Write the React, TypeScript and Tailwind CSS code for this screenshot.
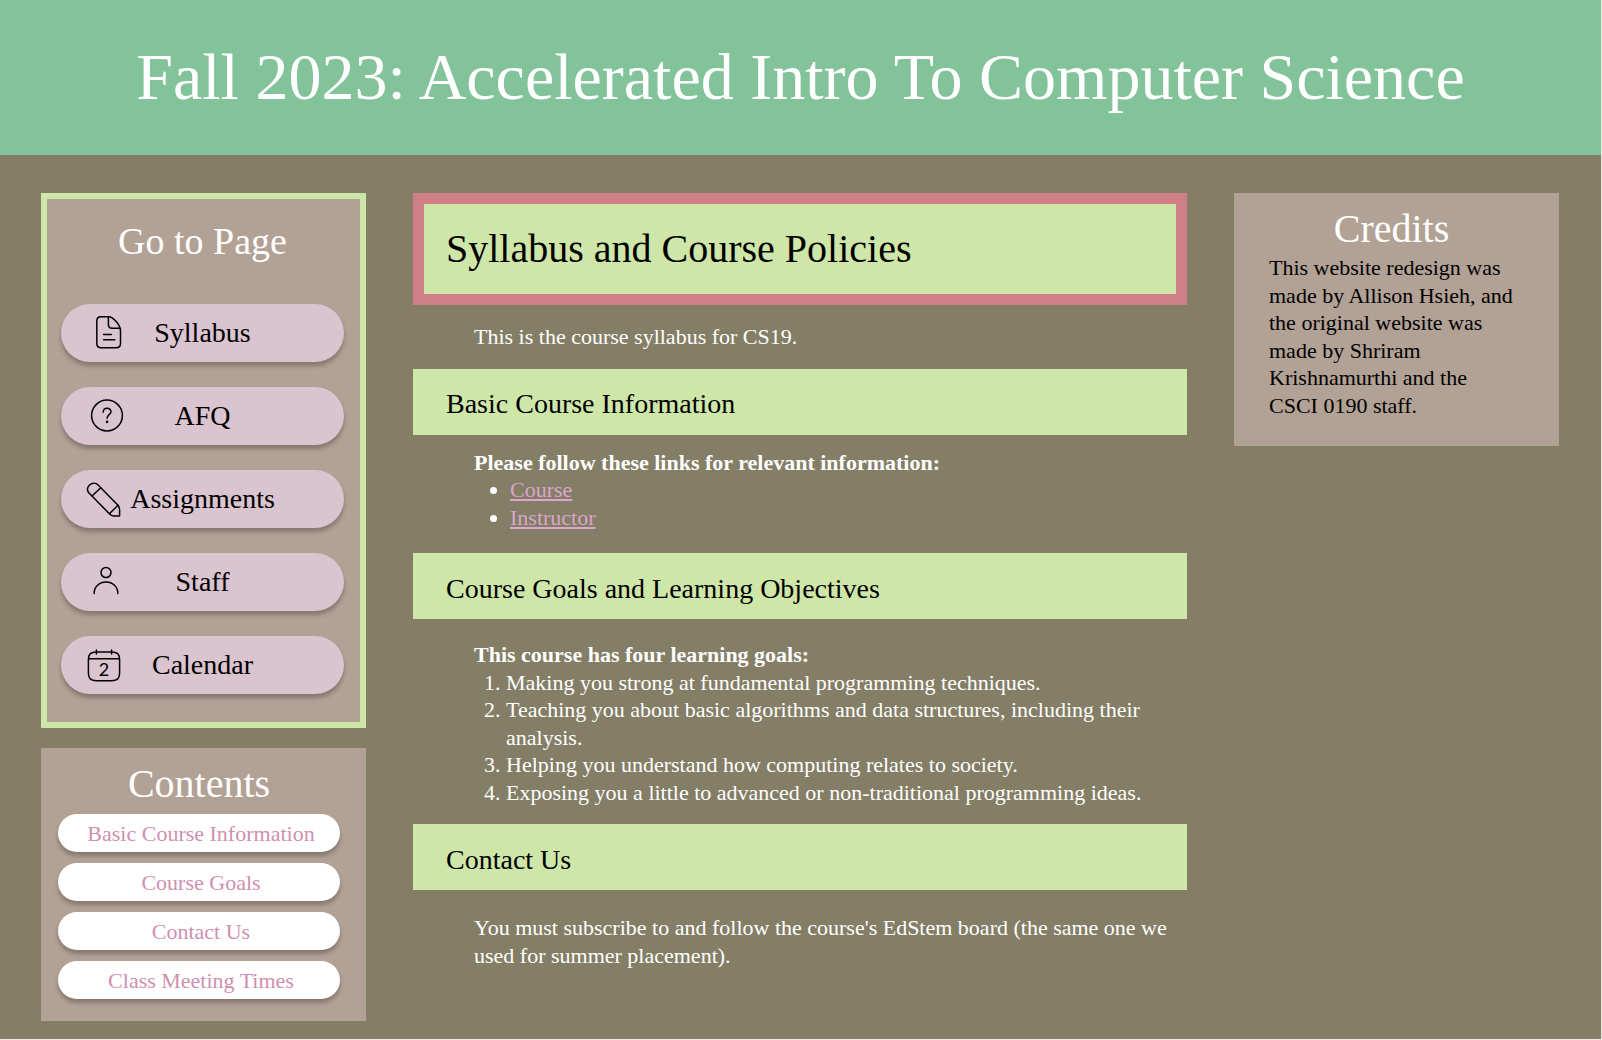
import React from "react";

function SyllabusIcon() {
  return (
    <>
      <path d="M22.5 3.7H15C12.4 3.7 10.8 5.3 10.8 8V30.6C10.8 33.3 12.4 34.8 15 34.8H30.3C33 34.8 34.5 33.3 34.5 30.6V18C34.5 12.4 27.6 3.7 22.5 3.7Z" />
      <path d="M22.4 3.8V11.5C22.4 14 23.8 15.3 26.3 15.3H34.2" />
      <path d="M17.6 21.6H25.4M17.6 26.8H28.8" />
    </>
  );
}

function QuestionIcon() {
  return (
    <>
      <circle cx="21" cy="19.5" r="15.4" />
      <path d="M17.2 16.2C17.2 10.9 25 11 25 15.8C25 18.8 21.1 18.6 21.1 22.2" />
      <circle cx="21.1" cy="25.8" r="0.6" fill="currentColor" />
    </>
  );
}

function PencilIcon() {
  return (
    <>
      <path d="M6 17L23.4 34.8C24.8 36.4 25.8 37 27.6 37H33.6V31C33.6 29.2 33.2 27.6 32 26.2L14.8 8.8L12.4 6.2C6.8 0.6 -2.4 8.6 3.2 14.2Z" />
      <path d="M6 17L14.8 8.8M23.4 34.8L32 26.2" />
    </>
  );
}

function PersonIcon() {
  return (
    <>
      <circle cx="20" cy="10.6" r="5" />
      <path d="M8.2 31.6V31C8.2 24.8 13.2 20 20 20S31.8 24.8 31.8 31V31.6" />
    </>
  );
}

function CalendarIcon() {
  return (
    <>
      <path d="M2.4 15.5C2.4 9 4.4 6.9 10.6 6.9H25.4C31.6 6.9 33.6 9 33.6 15.5V27C33.6 33.6 31.6 35.7 25.4 35.7H10.6C4.4 35.7 2.4 33.6 2.4 27Z" />
      <path d="M2.6 13.8H33.4M10.4 5V9M25.6 5V9" />
      <text
        x="18"
        y="31"
        textAnchor="middle"
        stroke="none"
        fill="currentColor"
        className="font-['Lato',sans-serif] text-[18px]"
      >
        2
      </text>
    </>
  );
}

const pages = [
  { label: "Syllabus", icon: SyllabusIcon },
  { label: "AFQ", icon: QuestionIcon },
  { label: "Assignments", icon: PencilIcon },
  { label: "Staff", icon: PersonIcon },
  { label: "Calendar", icon: CalendarIcon },
];

const contents = [
  { label: "Basic Course Information", href: "#basic" },
  { label: "Course Goals", href: "#goals" },
  { label: "Contact Us", href: "#contact" },
  { label: "Class Meeting Times", href: "#meeting" },
];

function SectionBar({ id, children }: { id: string; children: React.ReactNode }) {
  return (
    <h2 id={id} className="flex h-[66px] items-center bg-[#cfe6a9] pt-1 pl-[33px] text-[28px] text-black">
      {children}
    </h2>
  );
}

export default function App() {
  return (
    <div className="min-h-screen border-r border-b border-[#efe7e1] bg-[#847e66] font-['Liberation_Serif','Times_New_Roman',serif] text-[22px] leading-tight text-white">
      <header className="flex min-h-[155px] items-center justify-center bg-[#82c399] px-8">
        <h1 className="text-center text-[66px]">Fall 2023: Accelerated Intro To Computer Science</h1>
      </header>

      <div className="grid items-start gap-[47px] pt-[38px] pr-[42px] pb-[18px] pl-[41px] lg:grid-cols-[325px_minmax(0,1fr)_325px]">
        <aside className="flex flex-col gap-5">
          <nav aria-labelledby="pages-title" className="border-6 border-[#cfe6a9] bg-[#b2a195] pt-[18px] pr-4 pb-7 pl-3.5">
            <h2 id="pages-title" className="text-center text-[38px] leading-[48px]">
              Go to Page
            </h2>
            <ul className="mt-[39px] flex flex-col gap-[25px]">
              {pages.map(({ label, icon: Icon }) => (
                <li key={label}>
                  <a
                    href={"#" + label.toLowerCase()}
                    className="grid h-[58px] items-center rounded-full bg-[#dac4cf] px-[25px] text-[28px] text-black shadow-[0_4px_4px_rgba(0,0,0,0.25)]"
                  >
                    <svg
                      viewBox="0 0 40 40"
                      fill="none"
                      stroke="currentColor"
                      strokeWidth="1.5"
                      strokeLinecap="round"
                      strokeLinejoin="round"
                      aria-hidden="true"
                      className="col-start-1 row-start-1 size-10"
                    >
                      <Icon />
                    </svg>
                    <span className="col-start-1 row-start-1 pb-0.5 text-center">{label}</span>
                  </a>
                </li>
              ))}
            </ul>
          </nav>

          <nav aria-labelledby="contents-title" className="bg-[#b2a195] pt-3 pr-[26px] pb-[22px] pl-[17px]">
            <h2 id="contents-title" className="text-center text-[40px] leading-[48px]">
              Contents
            </h2>
            <ul className="mt-1.5 flex flex-col gap-[11px]">
              {contents.map(({ label, href }) => (
                <li key={label}>
                  <a
                    href={href}
                    className="flex h-[38px] items-center justify-center rounded-full bg-white pt-0.5 pl-1 text-[#cf8fb1] shadow-[0_4px_4px_rgba(0,0,0,0.25)]"
                  >
                    {label}
                  </a>
                </li>
              ))}
            </ul>
          </nav>
        </aside>

        <main>
          <h1 className="flex min-h-28 items-center border-[11px] border-[#cf7f85] bg-[#cfe6a9] pl-[22px] text-[40px] text-black">
            Syllabus and Course Policies
          </h1>
          <p className="py-[18px] pr-4 pl-[61px]">This is the course syllabus for CS19.</p>

          <SectionBar id="basic">Basic Course Information</SectionBar>
          <div className="pt-3.5 pr-4 pb-[22px] pl-[61px]">
            <p className="font-bold">Please follow these links for relevant information:</p>
            <ul className="list-disc pl-9">
              <li>
                <a href="#course" className="text-[#dba5cc] underline">Course</a>
              </li>
              <li>
                <a href="#instructor" className="text-[#dba5cc] underline">Instructor</a>
              </li>
            </ul>
          </div>

          <SectionBar id="goals">Course Goals and Learning Objectives</SectionBar>
          <div className="pt-[22px] pr-4 pb-[18px] pl-[61px]">
            <p className="font-bold">This course has four learning goals:</p>
            <ol className="list-decimal pl-8">
              <li>Making you strong at fundamental programming techniques.</li>
              <li>Teaching you about basic algorithms and data structures, including their analysis.</li>
              <li>Helping you understand how computing relates to society.</li>
              <li>Exposing you a little to advanced or non-traditional programming ideas.</li>
            </ol>
          </div>

          <SectionBar id="contact">Contact Us</SectionBar>
          <p className="pt-6 pr-4 pl-[61px]">
            You must subscribe to and follow the course's EdStem board (the same one we used for summer placement).
          </p>
        </main>

        <aside className="bg-[#b2a195] pt-3 pr-[45px] pb-[27px] pl-[35px]">
          <h2 className="text-center text-[40px] leading-[48px]">Credits</h2>
          <p className="mt-px text-black">
            This website redesign was made by Allison Hsieh, and the original website was made by Shriram Krishnamurthi
            and the CSCI 0190 staff.
          </p>
        </aside>
      </div>
    </div>
  );
}
